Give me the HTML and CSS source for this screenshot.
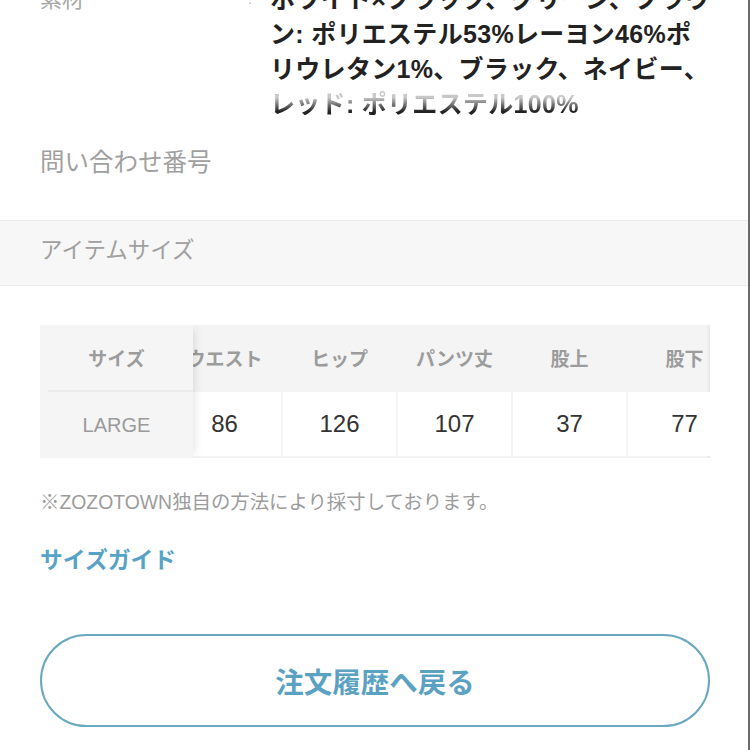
FILE: index.html
```html
<!DOCTYPE html>
<html lang="ja">
<head>
<meta charset="utf-8">
<link rel="stylesheet" href="styles.css">
</head>
<body>
<div class="page">
  <div class="spec-row">
    <div class="spec-label">素材</div>
    <div class="spec-colon">:</div>
    <div class="spec-value">
      ホワイト×ブラック、グリーン、ブラウ<br>ン: ポリエステル53%レーヨン46%ポ<br>リウレタン1%、ブラック、ネイビー、<br><span class="fade-line">レッド: ポリエステル100%</span>
    </div>
  </div>
  <div class="inquiry">問い合わせ番号</div>

  <div class="section-head">アイテムサイズ</div>

  <div class="size-table">
    <div class="fixed-col">
      <div class="th">サイズ</div>
      <div class="td-name">LARGE</div>
    </div>
    <div class="scroll-area">
      <div class="track">
        <div class="col"><div class="th">ウエスト</div><div class="td"><span>86</span></div></div>
        <div class="col"><div class="th">ヒップ</div><div class="td"><span>126</span></div></div>
        <div class="col"><div class="th">パンツ丈</div><div class="td"><span>107</span></div></div>
        <div class="col"><div class="th">股上</div><div class="td"><span>37</span></div></div>
        <div class="col"><div class="th">股下</div><div class="td"><span>77</span></div></div>
      </div>
    </div>
  </div>

  <p class="note">※ZOZOTOWN独自の方法により採寸しております。</p>
  <a class="guide">サイズガイド</a>

  <div class="btn">注文履歴へ戻る</div>
</div>
</body>
</html>
```

FILE: styles.css
```css
html, body {
  margin: 0;
  padding: 0;
  background: #ffffff;
}

body {
  font-family: "Liberation Sans", "Noto Sans CJK JP", sans-serif;
  overflow: hidden;
}

.page {
  width: 748px;
  height: 750px;
  border-right: 2px solid #6a6a6a;
  overflow: hidden;
  display: flex;
  flex-direction: column;
}

.spec-row {
  margin-top: -18px;
  display: flex;
  padding-left: 40px;
}

.spec-label {
  width: 208px;
  font-size: 22px;
  line-height: 35px;
  color: #a8a8a8;
}

.spec-colon {
  width: 22px;
  font-size: 14px;
  line-height: 35px;
  color: #b5b5b5;
}

.spec-value {
  font-size: 25px;
  line-height: 35px;
  font-weight: 700;
  color: #222222;
  white-space: nowrap;
  letter-spacing: 0.3px;
}

.fade-line {
  display: inline-block;
  line-height: 35px;
  -webkit-mask-image: linear-gradient(to bottom, rgba(0,0,0,0.25) 30%, rgba(0,0,0,1) 70%);
  mask-image: linear-gradient(to bottom, rgba(0,0,0,0.25) 30%, rgba(0,0,0,1) 70%);
}

.inquiry {
  padding: 24px 0 40px 40px;
  font-size: 24.5px;
  line-height: 34px;
  color: #a0a0a0;
}

.section-head {
  border-top: 1px solid #ececec;
  border-bottom: 1px solid #ececec;
  background: #f7f7f7;
  padding: 13px 0 17px 40px;
  font-size: 22.5px;
  line-height: 34px;
  color: #a0a0a0;
}

.size-table {
  margin: 39px 0 0 40px;
  width: 670px;
  height: 133px;
  display: flex;
  background: #f4f4f4;
  overflow: hidden;
  position: relative;
  box-shadow: inset -4px 0 4px -3px rgba(0,0,0,0.08);
}

.fixed-col {
  width: 153px;
  flex: none;
  display: flex;
  flex-direction: column;
  background: #f5f5f5;
  position: relative;
  z-index: 2;
  box-shadow: 6px 0 8px -4px rgba(0,0,0,0.10);
}

.th {
  height: 65px;
  display: flex;
  align-items: center;
  justify-content: center;
  font-size: 19px;
  font-weight: 700;
  color: #9c9c9c;
  white-space: nowrap;
}

.td-name {
  margin: 0 0 0 8px;
  height: 66px;
  border-top: 2px solid #ececec;
  display: flex;
  align-items: center;
  justify-content: center;
  padding-right: 8px;
  font-size: 20px;
  color: #9a9a9a;
}

.scroll-area {
  flex: 1;
  overflow: hidden;
}

.track {
  display: flex;
  margin-left: -26px;
}

.col {
  width: 115px;
  flex: none;
  display: flex;
  flex-direction: column;
}

.td {
  height: 64px;
  margin: 2px 1px 2px 1px;
  background: #ffffff;
  display: flex;
  align-items: center;
  justify-content: center;
  font-size: 24px;
  color: #333333;
}

.note {
  margin: 29px 0 0 40px;
  font-size: 19.4px;
  line-height: 30px;
  color: #9c9c9c;
}

.guide {
  margin: 28px 0 0 40px;
  font-size: 22.8px;
  line-height: 30px;
  font-weight: 700;
  color: #57a3c6;
}

.btn {
  margin: 59px 0 0 40px;
  width: 666px;
  height: 89px;
  border: 2px solid #6aa8be;
  border-radius: 47px;
  display: flex;
  align-items: center;
  justify-content: center;
  font-size: 28.5px;
  font-weight: 700;
  color: #5ba2c2;
}
```
